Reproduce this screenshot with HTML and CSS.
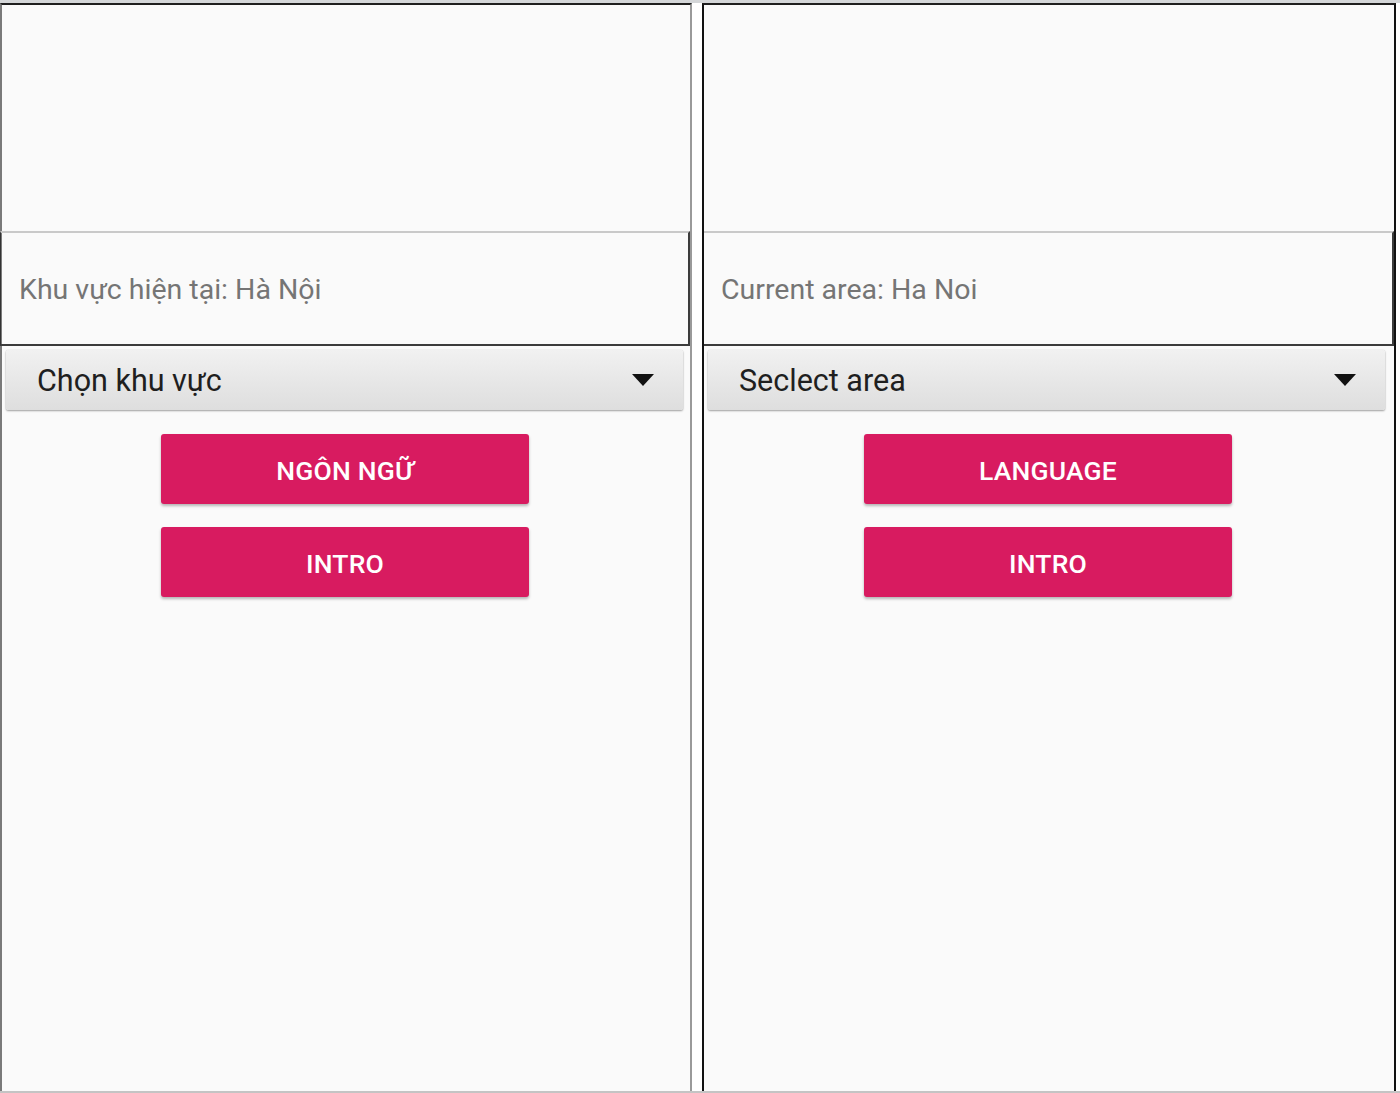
FILE: index.html
```html
<!DOCTYPE html>
<html lang="vi">
<head>
<meta charset="utf-8">
<title>Area settings</title>
<link rel="stylesheet" href="styles.css">
</head>
<body>
<div class="screen">
  <div class="panel panel-left">
    <div class="header"></div>
    <div class="info"><span class="info-text">Khu vực hiện tại: Hà Nội</span></div>
    <div class="spinner"><span class="spinner-text">Chọn khu vực</span><span class="caret"></span></div>
    <div class="actions">
      <button class="btn">NGÔN NGỮ</button>
      <button class="btn">INTRO</button>
    </div>
  </div>
  <div class="panel panel-right">
    <div class="header"></div>
    <div class="info"><span class="info-text">Current area: Ha Noi</span></div>
    <div class="spinner"><span class="spinner-text">Seclect area</span><span class="caret"></span></div>
    <div class="actions">
      <button class="btn">LANGUAGE</button>
      <button class="btn">INTRO</button>
    </div>
  </div>
</div>
</body>
</html>
```
FILE: styles.css
```css
html, body {
  margin: 0;
  padding: 0;
}
body {
  width: 1400px;
  height: 1093px;
  overflow: hidden;
  background: #ffffff;
  font-family: Roboto, "Noto Sans", "Liberation Sans", sans-serif;
}
.screen {
  display: flex;
  gap: 10px;
  height: 1093px;
  box-sizing: border-box;
  border-top: 3px solid #d4d6d8;
  border-bottom: 2px solid #c4c4c4;
}
.panel {
  display: flex;
  flex-direction: column;
  background: #fafafa;
  box-sizing: border-box;
  border-top: 2px solid #1e1e1e;
}
.panel-left {
  width: 692px;
  border-left: 2px solid #7a7a7a;
  border-right: 2px solid #9a9a9a;
}
.panel-right {
  width: 694px;
  border-left: 2px solid #111;
  border-right: 2px solid #111;
}
.header {
  height: 226px;
}
.info {
  height: 109px;
  display: flex;
  align-items: center;
  border-top: 2px solid #c9c9c9;
  border-bottom: 2px solid #3c3c3c;
  border-right: 2px solid #3c3c3c;
  padding-left: 17px;
  padding-top: 2px;
}
.panel-left .info {
  border-left: 1px solid #333;
  margin-left: -2px;
  padding-left: 18px;
}
.info-text {
  font-size: 28.5px;
  color: #757575;
}
.spinner {
  margin: 4px 7px 0 4px;
  height: 60px;
  display: flex;
  align-items: center;
  justify-content: space-between;
  padding: 0 29px 0 31px;
  border-radius: 2px;
  background: linear-gradient(#f1f1f1, #dedede);
  box-shadow: 0 1px 2px rgba(0, 0, 0, 0.35), 0 0 1px rgba(0, 0, 0, 0.2);
}
.panel-right .spinner {
  margin-right: 9px;
}
.spinner-text {
  font-size: 30.5px;
  color: #1f1f1f;
}
.caret {
  width: 0;
  height: 0;
  border-left: 11px solid transparent;
  border-right: 11px solid transparent;
  border-top: 12px solid #111;
}
.actions {
  display: flex;
  flex-direction: column;
  align-items: center;
  gap: 23px;
  margin-top: 24px;
  padding-right: 2px;
}
.btn {
  width: 368px;
  height: 70px;
  border: none;
  border-radius: 3px;
  background: #d81b60;
  color: #fff;
  font-family: Roboto, "Noto Sans", "Liberation Sans", sans-serif;
  font-weight: 500;
  font-size: 26.5px;
  letter-spacing: 0.2px;
  box-shadow: 0 2px 3px rgba(0, 0, 0, 0.28);
  padding: 2px 0 0 0;
}
```
